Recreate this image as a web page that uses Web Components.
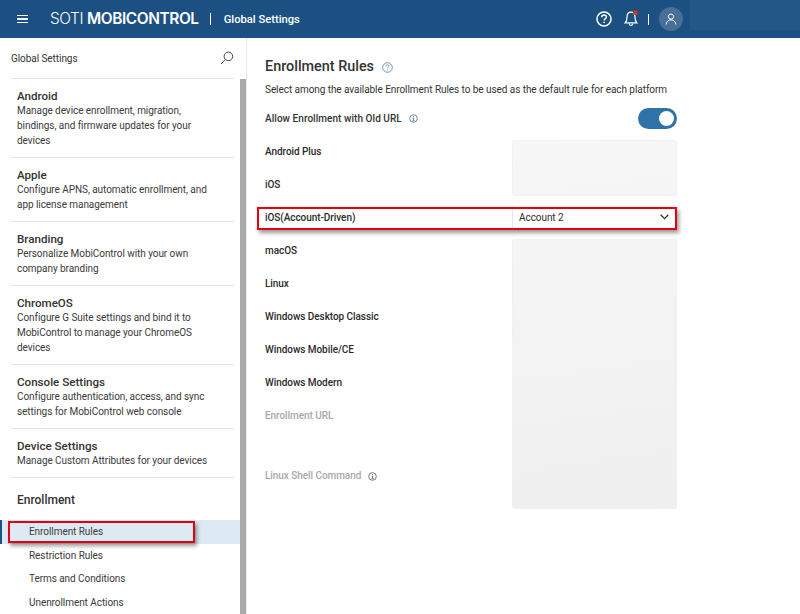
<!DOCTYPE html>
<html lang="en"><head><meta charset="utf-8"><title>Global Settings</title>
<style>
html,body{margin:0;height:100%;overflow:hidden;background:#fff}
body{font-family:Roboto,"Liberation Sans",sans-serif;color:#333}
</style></head><body>
<app-shell>
  <app-header slot="header" title-text="Global Settings"></app-header>
  <side-nav slot="nav" heading="Global Settings">
    <nav-group title-text="Android">Manage device enrollment, migration, bindings, and firmware updates for your devices</nav-group>
    <nav-group title-text="Apple">Configure APNS, automatic enrollment, and app license management</nav-group>
    <nav-group title-text="Branding">Personalize MobiControl with your own company branding</nav-group>
    <nav-group title-text="ChromeOS">Configure G Suite settings and bind it to MobiControl to manage your ChromeOS devices</nav-group>
    <nav-group title-text="Console Settings">Configure authentication, access, and sync settings for MobiControl web console</nav-group>
    <nav-group title-text="Device Settings">Manage Custom Attributes for your devices</nav-group>
    <nav-section title-text="Enrollment">
      <nav-item active marked>Enrollment Rules</nav-item>
      <nav-item>Restriction Rules</nav-item>
      <nav-item>Terms and Conditions</nav-item>
      <nav-item>Unenrollment Actions</nav-item>
    </nav-section>
  </side-nav>
  <rules-panel slot="main">
    <rule-row label="Android Plus" start></rule-row>
    <rule-row label="iOS" end></rule-row>
    <rule-row label="iOS(Account-Driven)" value="Account 2" marked></rule-row>
    <rule-row label="macOS" start></rule-row>
    <rule-row label="Linux"></rule-row>
    <rule-row label="Windows Desktop Classic"></rule-row>
    <rule-row label="Windows Mobile/CE"></rule-row>
    <rule-row label="Windows Modern"></rule-row>
    <rule-row label="Enrollment URL" disabled tall></rule-row>
    <rule-row label="Linux Shell Command" disabled info last></rule-row>
  </rules-panel>
</app-shell>
<script>
const INFO=`<svg width="9" height="9" viewBox="0 0 9 9" fill="none" stroke="currentColor" stroke-width=".8"><circle cx="4.5" cy="4.5" r="3.8"/><path d="M3.6 4h1v2.6M3.5 6.7h2.1"/><path d="M4.5 2.2v.9"/></svg>`;
function def(name,html){
  customElements.define(name,class extends HTMLElement{
    connectedCallback(){
      if(this.shadowRoot)return;
      const r=this.attachShadow({mode:'open'});
      r.innerHTML=typeof html==='function'?html(this):html;
    }
  });
}
def('app-shell',`<style>
:host{display:grid;grid-template-columns:247px 1fr;grid-template-rows:38px 1fr;width:800px;height:614px;overflow:hidden}
.h{grid-column:1/3}.n,.m{min-height:0;overflow:hidden}
</style><div class="h"><slot name="header"></slot></div><div class="n"><slot name="nav"></slot></div><div class="m"><slot name="main"></slot></div>`);
def('app-header',e=>`<style>
:host{display:flex;align-items:center;height:38px;color:#fff;background:#1c5082;position:relative}
.menu{margin-left:17px;width:11px;height:9px;display:flex;flex-direction:column;justify-content:space-between}
.menu i{display:block;height:1.4px;background:#fff}
.logo{margin-left:22px;font:300 15.4px/1 Inter,"Liberation Sans",sans-serif;letter-spacing:-.4px;white-space:nowrap}
.logo b{font-weight:600}
.sep{width:1px;height:12px;background:#fff;margin:0 13px 0 11px}
.t{font-size:11.2px;font-weight:500;white-space:nowrap}
.sp{flex:1}
.i{display:flex;align-items:center}
.ib{position:relative;height:24px;width:18px;display:flex;align-items:center;justify-content:center}
.dot{position:absolute;left:11px;top:3px;width:5px;height:5px;border-radius:50%;background:#c0392b}
.s2{width:1px;height:11px;background:#fff;margin:0 10px 0 8px}
.av{width:24px;height:24px;border-radius:50%;background:#4a6f97;display:flex;align-items:center;justify-content:center}
.glow{width:110px;height:30px;align-self:flex-start;background:#225787}
</style>
<div class="menu"><i></i><i></i><i></i></div>
<div class="logo">SOTI <b>MOBICONTROL</b></div><div class="sep"></div><div class="t">${e.getAttribute('title-text')}</div><div class="sp"></div>
<div class="i" style="margin-right:7px">
<div class="ib" style="margin-right:9px"><svg width="16" height="16" viewBox="0 0 16 16" fill="none" stroke="#fff" stroke-width="1.5"><circle cx="8" cy="8" r="7"/><path d="M5.700 6.200c.1-1.400 1.100-2.100 2.400-2.100 1.300 0 2.300.8 2.300 1.900 0 1.600-2.300 1.700-2.300 3.500"/><path d="M8.100 10.700v1.400"/></svg></div>
<div class="ib"><svg width="16" height="18" viewBox="0 0 16 18" fill="none" stroke="#fff" stroke-width="1.200"><path d="M8 2.200c-2.600 0-3.900 2-3.900 4.200 0 3.500-.9 5.300-2 6.500h11.800c-1.100-1.200-2-3-2-6.500 0-2.200-1.300-4.200-3.900-4.200z"/><path d="M6.200 13.600c.2 1.300.9 1.900 1.800 1.900s1.600-.6 1.800-1.900"/></svg><span class="dot"></span></div>
<div class="s2"></div>
<div class="av"><svg width="12" height="12" viewBox="0 0 12 12" fill="none" stroke="#fff" stroke-width="1"><circle cx="6" cy="3.600" r="2.600"/><path d="M1.200 11.500c.2-2.900 2.200-4.700 4.800-4.700s4.600 1.800 4.800 4.700"/></svg></div>
</div><div class="glow"></div>`);
def('side-nav',e=>`<style>
:host{display:block;position:relative;height:576px;width:247px;box-sizing:border-box;border-right:1px solid #e6e6e6;overflow:hidden}
.top{display:flex;align-items:center;justify-content:space-between;height:40px;margin:0 6px 0 11px;border-bottom:1px solid #e4e4e4;font-size:10px;letter-spacing:-.06px;color:#333;width:223px}
.wrap{display:flex;height:536px}
.list{width:240px;overflow:hidden;flex:none}
.bar{width:6px;background:#aaa;flex:none}
</style>
<div class="top"><span>${e.getAttribute('heading')}</span><svg width="14" height="14" viewBox="0 0 14 14" fill="none" stroke="#333" stroke-width=".9"><circle cx="8.400" cy="5.400" r="4.300"/><path d="M5.300 8.500L1 13"/></svg></div>
<div class="wrap"><div class="list"><slot></slot></div><div class="bar"></div></div>`);
def('nav-group',e=>`<style>
:host{display:block;margin:0 6px 0 11px;padding:10px 6px 9px;border-bottom:1px solid #e4e4e4;color:#333}
.t{font-size:11.6px;font-weight:500;line-height:14px;color:#333}
.d{font-size:10px;letter-spacing:-.06px;line-height:15px;color:#3a3a3a;max-width:195px}
</style><div class="t">${e.getAttribute('title-text')}</div><div class="d"><slot></slot></div>`);
def('nav-section',e=>`<style>
:host{display:block;padding-top:14px}
.t{font-size:12px;font-weight:500;line-height:16px;padding-left:17px;margin-bottom:12px;color:#333}
</style><div class="t">${e.getAttribute('title-text')}</div><slot></slot>`);
def('nav-item',e=>`<style>
:host{display:block;position:relative;height:23.5px;line-height:23.5px;padding-left:29px;font-size:10px;letter-spacing:-.06px;color:#3a3a3a;white-space:nowrap}
:host([active]){background:#deeaf3;box-shadow:inset 2px 0 0 #1c5082}
.mark{position:absolute;left:8px;top:1px;width:187px;height:22px;box-sizing:border-box;border:2px solid #e4000f;box-shadow:2px 3px 4px rgba(0,0,0,.4)}
</style><slot></slot>${e.hasAttribute('marked')?'<span class="mark"></span>':''}`);
def('rules-panel',`<style>
:host{display:block;padding:19px 123px 0 18px;color:#333}
h1{margin:0;font-size:14.4px;line-height:20px;font-weight:500;display:flex;align-items:center;gap:8px;color:#333}
h1 svg{color:#4a7fa8}
p{margin:5px 0 0;font-size:10px;letter-spacing:-.06px;line-height:16px;color:#333;white-space:nowrap}
.old{display:flex;align-items:center;justify-content:space-between;height:22px;margin-top:9px;font-size:10px;letter-spacing:.05px;font-weight:500}
.old span{display:flex;align-items:center;gap:7px}
.old svg{color:#4a6f8f}
.tg{width:39px;height:21px;border-radius:11px;background:#2f72a8;position:relative}
.tg i{position:absolute;right:3px;top:3px;width:15px;height:15px;border-radius:50%;background:#fff}
.rows{margin-top:11px}
</style>
<h1>Enrollment Rules <svg width="11" height="11" viewBox="0 0 11 11" fill="none" stroke="currentColor" stroke-width=".8"><circle cx="5.500" cy="5.500" r="4.800"/><path d="M3.900 4.300c.1-1 .8-1.500 1.700-1.500.9 0 1.500.6 1.500 1.300 0 1.100-1.500 1.100-1.500 2.300M5.600 7.400v.9"/></svg></h1>
<p>Select among the available Enrollment Rules to be used as the default rule for each platform</p>
<div class="old"><span>Allow Enrollment with Old URL ${INFO}</span><div class="tg"><i></i></div></div>
<div class="rows"><slot></slot></div>`);
def('rule-row',e=>{
 const v=e.getAttribute('value'),h=e.hasAttribute('tall')?60:e.hasAttribute('last')?45:33;
 const d=e.hasAttribute('disabled'),mk=e.hasAttribute('marked');
 const end=e.hasAttribute('end'),last=e.hasAttribute('last'),start=e.hasAttribute('start');
 const rad=start?'3px 3px 0 0':(end||last)?'0 0 3px 3px':'0';
 const edge='#f1f1f1';
 return `<style>
:host{display:grid;grid-template-columns:247px 165px;position:relative;height:${h}px;font-size:10px;letter-spacing:-.06px;font-weight:500;color:${d?'#a8a8a8':'#2b2b2b'};box-sizing:border-box}
.l{height:22px;line-height:22px;padding-top:1px;display:flex;align-items:center;gap:7px;white-space:nowrap}
.l svg{color:#555}
.f{box-sizing:border-box;height:${v?'22px':end?'23px':'auto'};display:flex;align-items:center;justify-content:space-between;padding:0 8px 0 6px;font-weight:400;border-radius:${rad};
${v?'background:#fff;border-left:1px solid #e6e6e6;':`background:linear-gradient(172deg,#fbfbfb 0,#f6f6f6 250px,#ededed 100%) fixed;border:1px solid ${edge};border-width:${start?1:0}px 1px ${end||last?1:0}px;`}}
.mark{position:absolute;left:-8px;top:1px;width:420px;height:23px;box-sizing:border-box;border:2px solid #e4000f;box-shadow:2px 3px 4px rgba(0,0,0,.4);pointer-events:none}
</style>
<div class="l">${e.getAttribute('label')}${e.hasAttribute('info')?INFO:''}</div>
<div class="f">${v?`<span>${v}</span><svg width="9" height="6" viewBox="0 0 9 6" fill="none" stroke="#333" stroke-width="1.3"><path d="M.7 .8L4.500 4.600 8.300 .8"/></svg>`:''}</div>
${mk?'<span class="mark"></span>':''}`;});
</script>
</body></html>
